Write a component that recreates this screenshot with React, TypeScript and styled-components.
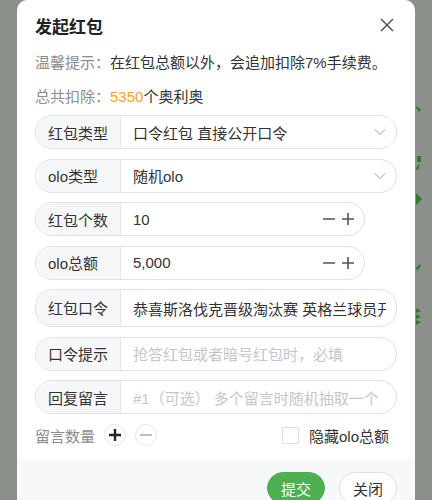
import styled, { createGlobalStyle } from "styled-components";

const Global = createGlobalStyle`
  html, body {
    margin: 0;
    padding: 0;
    background: #8b918a;
    font-family: "Liberation Sans", "Noto Sans CJK SC", sans-serif;
    overflow: hidden;
  }
`;

const Page = styled.div`
  position: relative;
  height: 500px;
  overflow: hidden;
`;

const Backdrop = styled.svg`
  position: absolute;
  left: 414px;
  top: 0;
`;

const Modal = styled.div`
  position: relative;
  margin-left: 17px;
  width: 398px;
  background: #fff;
  border-radius: 10px 10px 0 0;
`;

const Body = styled.div`
  padding: 0 18px;
`;

const Header = styled.div`
  height: 50px;
  display: flex;
  align-items: center;
  justify-content: space-between;
`;

const Title = styled.h1`
  margin: 0;
  font-size: 17px;
  font-weight: 700;
  color: #222;
`;

const Close = styled.button`
  border: none;
  background: none;
  padding: 0;
  margin-right: 2px;
  display: flex;
  cursor: pointer;
`;

const Line = styled.div<{ $top: number }>`
  margin-top: ${(p) => p.$top}px;
  font-size: 15px;
  line-height: 20px;
  color: #333;
  white-space: nowrap;
`;

const Muted = styled.span`
  color: #8c8c8c;
`;

const Amount = styled.span`
  color: #f5a623;
`;

const Form = styled.div`
  margin-top: 8px;
  display: flex;
  flex-direction: column;
  gap: 9.5px;
`;

const Group = styled.div<{ $width?: number; $tall?: boolean }>`
  display: flex;
  width: ${(p) => (p.$width ? `${p.$width}px` : "100%")};
  height: ${(p) => (p.$tall ? 38 : 34)}px;
  box-sizing: border-box;
  border: 1px solid #dfe1e6;
  border-radius: 17px;
  overflow: hidden;
`;

const Addon = styled.div<{ $short?: boolean }>`
  flex: 0 0 85px;
  box-sizing: border-box;
  height: ${(p) => (p.$short ? "35px" : "100%")};
  padding-left: 12px;
  display: flex;
  align-items: center;
  background: #f6f7f9;
  border-right: 1px solid #e4e6ea;
  border-bottom: ${(p) => (p.$short ? "1px solid #e4e6ea" : "none")};
  border-radius: ${(p) => (p.$short ? "0 0 0 17px" : "0")};
  font-size: 15px;
  color: #333;
  white-space: nowrap;
`;

const Value = styled.div<{ $placeholder?: boolean }>`
  flex: 1;
  min-width: 0;
  display: flex;
  align-items: center;
  padding: 0 10px 0 12px;
  font-size: 15px;
  color: ${(p) => (p.$placeholder ? "#c3c6cc" : "#333")};
  white-space: nowrap;
`;

const ValueText = styled.span`
  flex: 1;
  min-width: 0;
  overflow: hidden;
`;

const Stepper = styled.div`
  display: flex;
  gap: 7px;
  color: #555;
`;

const Counter = styled.div`
  margin-top: 9px;
  height: 24px;
  display: flex;
  align-items: center;
  justify-content: space-between;
`;

const CounterLeft = styled.div`
  display: flex;
  align-items: center;
  gap: 9px;
  font-size: 15px;
  color: #8c8c8c;
`;

const RoundBtn = styled.button<{ $muted?: boolean }>`
  width: 22px;
  height: 22px;
  padding: 0;
  border-radius: 50%;
  border: 1px solid #e6e6e6;
  background: #fff;
  display: flex;
  align-items: center;
  justify-content: center;
  color: ${(p) => (p.$muted ? "#bdbdbd" : "#222")};
`;

const Check = styled.label`
  display: flex;
  align-items: center;
  gap: 10px;
  margin-right: 8px;
  font-size: 15px;
  color: #333;
`;

const Box = styled.span`
  width: 15px;
  height: 15px;
  border: 1px solid #dcdfe6;
  border-radius: 2px;
`;

const Footer = styled.div`
  margin-top: 12px;
  background: #f7f8fa;
  padding: 13px 18px 14px;
  display: flex;
  justify-content: flex-end;
  gap: 14px;
`;

const Button = styled.button<{ $primary?: boolean }>`
  width: 58px;
  height: 32px;
  border-radius: 16px;
  font-family: inherit;
  font-size: 15px;
  border: 1px solid ${(p) => (p.$primary ? "#4caf50" : "#dcdfe6")};
  background: ${(p) => (p.$primary ? "#4caf50" : "#fff")};
  color: ${(p) => (p.$primary ? "#fff" : "#333")};
`;

const Chevron = () => (
  <svg width="12" height="8" viewBox="0 0 12 8">
    <path d="M1 1.5 L6 6.5 L11 1.5" fill="none" stroke="#c3c6cc" strokeWidth="1.2" />
  </svg>
);

const Minus = ({ w = 1.6 }: { w?: number }) => (
  <svg width="12" height="12" viewBox="0 0 12 12">
    <path d="M0 6 H12" stroke="currentColor" strokeWidth={w} />
  </svg>
);

const Plus = ({ w = 1.6 }: { w?: number }) => (
  <svg width="12" height="12" viewBox="0 0 12 12">
    <path d="M0 6 H12 M6 0 V12" stroke="currentColor" strokeWidth={w} />
  </svg>
);

export default function App() {
  return (
    <Page>
      <Global />
      <Backdrop width="18" height="500" viewBox="0 0 18 500">
        <path d="M3 106 L7 110 L5 112 L2 108 Z" fill="#2f7a2f" />
        <path d="M3 156 H7 V162 H3 Z M3 166 L6 164 L4 170 L2 170 Z" fill="#2f7a2f" />
        <path d="M2 193 L8 199 L2 205 Z" fill="#2f7a2f" />
        <path d="M2 268 L6 264 L7 266 L3 271 Z" fill="#2f7a2f" />
        <path d="M2 308 L7 311 L2 313 Z M2 314 L7 317 L2 319 Z M2 320 L7 322 L2 325 Z" fill="#2f7a2f" />
      </Backdrop>
      <Modal>
        <Body>
          <Header>
            <Title>发起红包</Title>
            <Close>
              <svg width="16" height="16" viewBox="0 0 16 16">
                <path d="M2 2 L14 14 M14 2 L2 14" stroke="#555" strokeWidth="1.5" />
              </svg>
            </Close>
          </Header>
          <Line $top={3}>
            <Muted>温馨提示：</Muted>在红包总额以外，会追加扣除7%手续费。
          </Line>
          <Line $top={14}>
            <Muted>总共扣除：</Muted>
            <Amount>5350</Amount>个奥利奥
          </Line>
          <Form>
            <Group>
              <Addon>红包类型</Addon>
              <Value>
                <ValueText>口令红包 直接公开口令</ValueText>
                <Chevron />
              </Value>
            </Group>
            <Group>
              <Addon>olo类型</Addon>
              <Value>
                <ValueText>随机olo</ValueText>
                <Chevron />
              </Value>
            </Group>
            <Group $width={330}>
              <Addon>红包个数</Addon>
              <Value>
                <ValueText>10</ValueText>
                <Stepper>
                  <Minus />
                  <Plus />
                </Stepper>
              </Value>
            </Group>
            <Group $width={330}>
              <Addon>olo总额</Addon>
              <Value>
                <ValueText>5,000</ValueText>
                <Stepper>
                  <Minus />
                  <Plus />
                </Stepper>
              </Value>
            </Group>
            <Group $tall>
              <Addon $short>红包口令</Addon>
              <Value>
                <ValueText>恭喜斯洛伐克晋级淘汰赛 英格兰球员开始庆祝</ValueText>
              </Value>
            </Group>
            <Group>
              <Addon>口令提示</Addon>
              <Value $placeholder>
                <ValueText>抢答红包或者暗号红包时，必填</ValueText>
              </Value>
            </Group>
            <Group>
              <Addon>回复留言</Addon>
              <Value $placeholder>
                <ValueText>#1（可选） 多个留言时随机抽取一个</ValueText>
              </Value>
            </Group>
          </Form>
          <Counter>
            <CounterLeft>
              留言数量
              <RoundBtn>
                <Plus w={2.4} />
              </RoundBtn>
              <RoundBtn $muted>
                <Minus w={2} />
              </RoundBtn>
            </CounterLeft>
            <Check>
              <Box />
              隐藏olo总额
            </Check>
          </Counter>
        </Body>
        <Footer>
          <Button $primary>提交</Button>
          <Button>关闭</Button>
        </Footer>
      </Modal>
    </Page>
  );
}
